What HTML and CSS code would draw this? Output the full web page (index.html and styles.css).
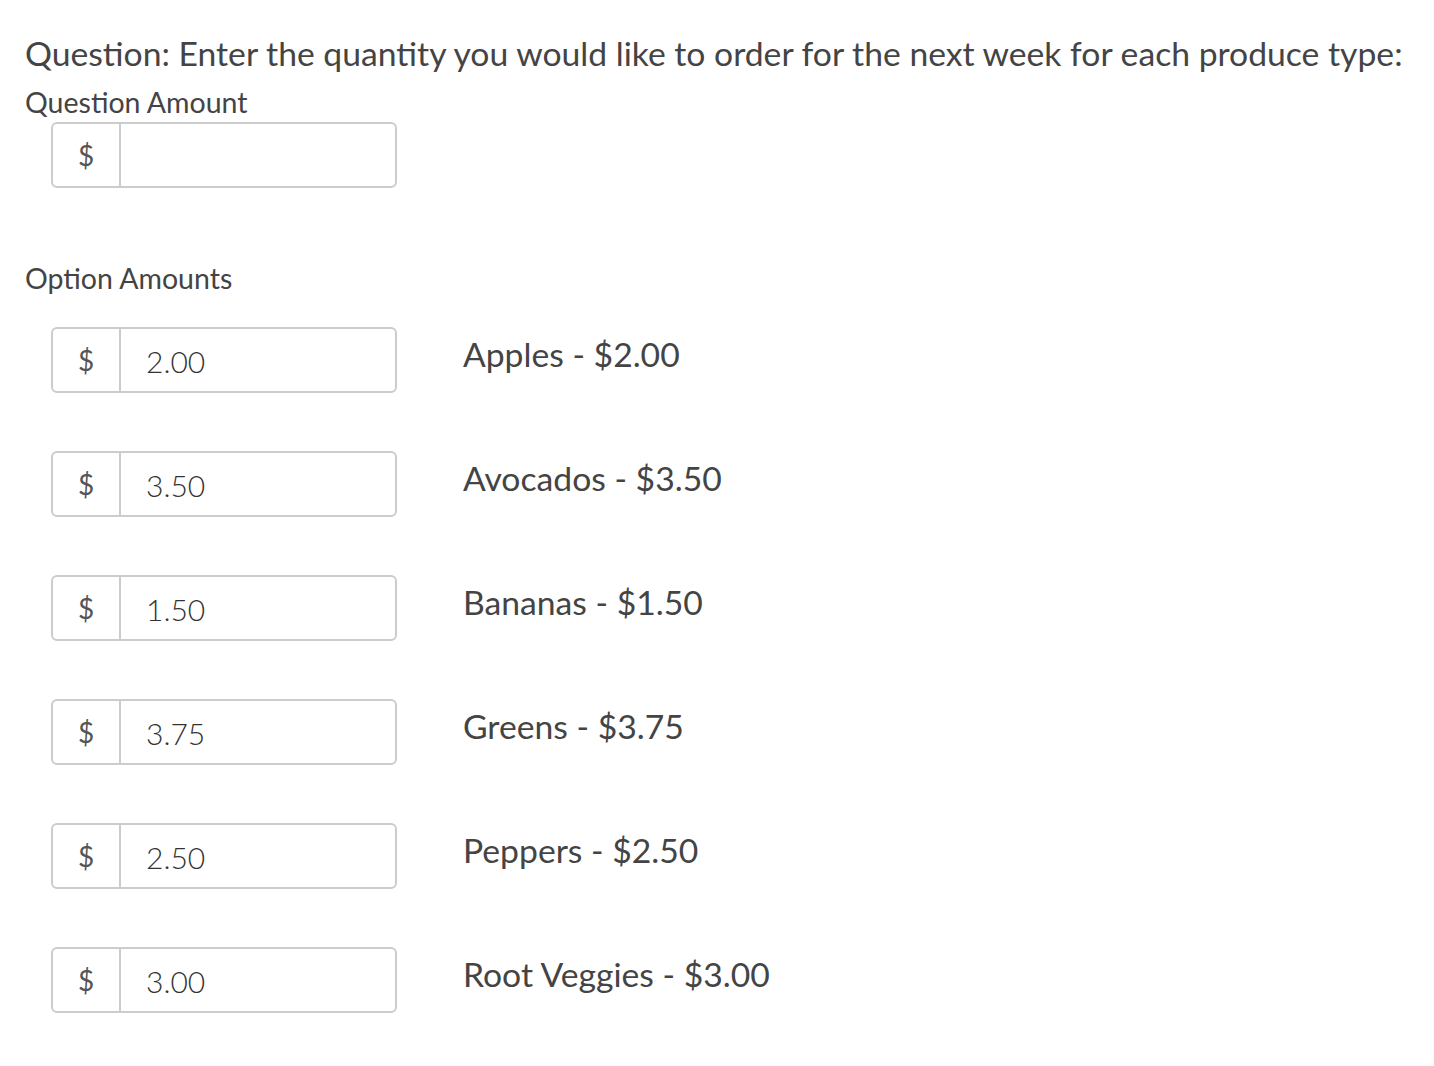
FILE: index.html
```html
<!DOCTYPE html>
<html>
<head>
<meta charset="utf-8">
<link rel="stylesheet" href="styles.css">
</head>
<body>
<div class="page">
  <h1 class="question">Question: Enter the quantity you would like to order for the next week for each produce type:</h1>
  <div class="label">Question Amount</div>
  <div class="group">
    <span class="addon">$</span>
    <span class="field"></span>
  </div>

  <div class="label options-label">Option Amounts</div>
  <div class="options">
    <div class="row">
      <div class="group"><span class="addon">$</span><span class="field">2.00</span></div>
      <div class="opt">Apples - $2.00</div>
    </div>
    <div class="row">
      <div class="group"><span class="addon">$</span><span class="field">3.50</span></div>
      <div class="opt">Avocados - $3.50</div>
    </div>
    <div class="row">
      <div class="group"><span class="addon">$</span><span class="field">1.50</span></div>
      <div class="opt">Bananas - $1.50</div>
    </div>
    <div class="row">
      <div class="group"><span class="addon">$</span><span class="field">3.75</span></div>
      <div class="opt">Greens - $3.75</div>
    </div>
    <div class="row">
      <div class="group"><span class="addon">$</span><span class="field">2.50</span></div>
      <div class="opt">Peppers - $2.50</div>
    </div>
    <div class="row">
      <div class="group"><span class="addon">$</span><span class="field">3.00</span></div>
      <div class="opt">Root Veggies - $3.00</div>
    </div>
  </div>
</div>
</body>
</html>
```

FILE: styles.css
```css
html, body {
  margin: 0;
  padding: 0;
  background: #ffffff;
}
body {
  font-family: Lato, "Open Sans", sans-serif;
  color: #444444;
}
.page {
  padding: 33px 0 0 25px;
}
.question {
  margin: 0;
  font-size: 33.7px;
  font-weight: 400;
  line-height: 40px;
  color: #444444;
  white-space: nowrap;
}
.label {
  font-size: 28.5px;
  line-height: 34px;
  margin-top: 12px;
  color: #444444;
}
.group {
  display: flex;
  width: 346px;
  height: 66px;
  box-sizing: border-box;
  border: 2px solid #cccccc;
  border-radius: 6px;
  margin-left: 26px;
  margin-top: 3px;
}
.addon {
  width: 66px;
  border-right: 2px solid #cccccc;
  display: flex;
  align-items: center;
  justify-content: center;
  font-size: 28px;
  color: #555555;
}
.field {
  flex: 1;
  padding-left: 25px;
  padding-top: 14px;
  font-size: 30px;
  line-height: 36px;
  font-weight: 300;
  color: #333333;
}
.options-label {
  margin-top: 73px;
}
.options {
  display: flex;
  flex-direction: column;
  gap: 58px;
  margin-top: 32px;
}
.row {
  display: flex;
  align-items: flex-start;
}
.row .group {
  margin-top: 0;
}
.opt {
  margin-left: 66px;
  font-size: 33.7px;
  line-height: 40px;
  padding-top: 7px;
  color: #444444;
}
```
